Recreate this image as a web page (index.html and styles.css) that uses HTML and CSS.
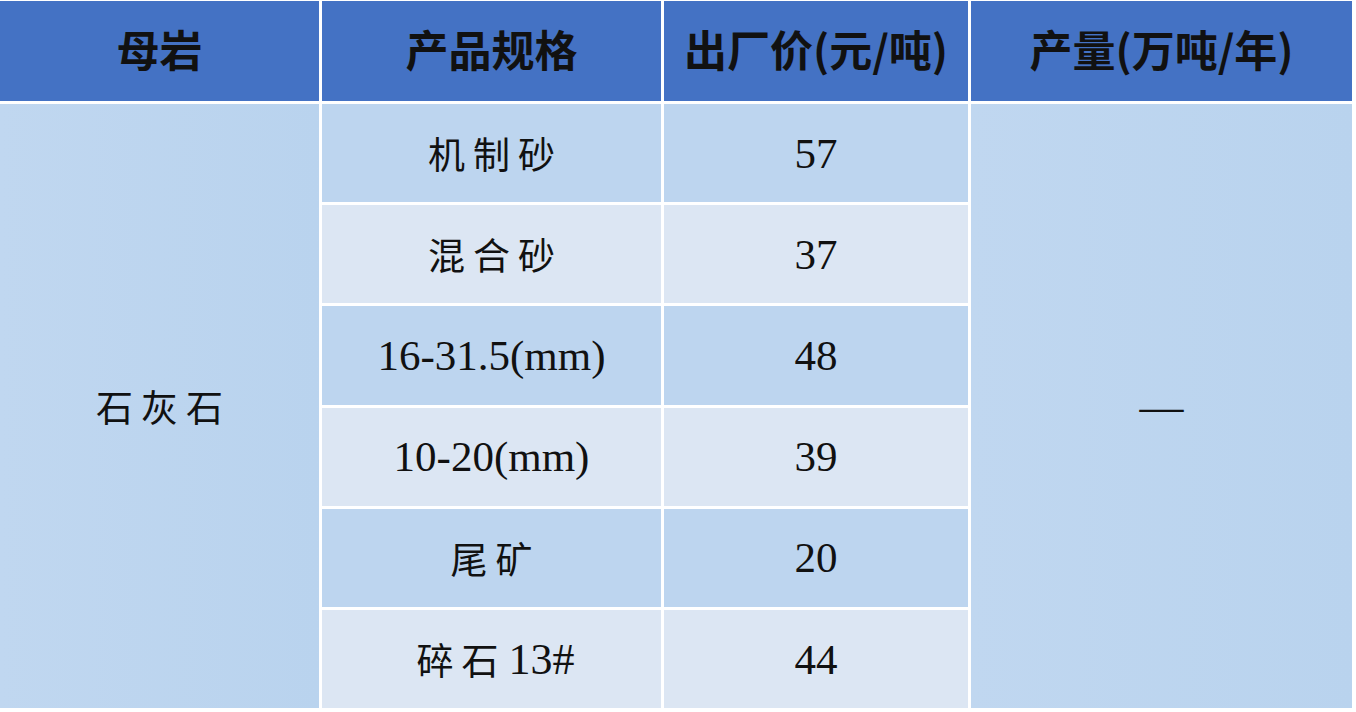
FILE: index.html
```html
<!DOCTYPE html>
<html lang="zh-CN">
<head>
<meta charset="utf-8">
<title>石灰石产品价格</title>
<link rel="stylesheet" href="styles.css">
</head>
<body>
<div class="table">
  <div class="th">母岩</div>
  <div class="th">产品规格</div>
  <div class="th">出厂价(元/吨)</div>
  <div class="th">产量(万吨/年)</div>

  <div class="td merged rock"><span class="zh">石灰石</span></div>
  <div class="td merged output"><span class="dash">—</span></div>

  <div class="td dark"><span class="zh">机制砂</span></div>
  <div class="td dark num">57</div>
  <div class="td light"><span class="zh">混合砂</span></div>
  <div class="td light num">37</div>
  <div class="td dark num">16-31.5(mm)</div>
  <div class="td dark num">48</div>
  <div class="td light num">10-20(mm)</div>
  <div class="td light num">39</div>
  <div class="td dark"><span class="zh">尾矿</span></div>
  <div class="td dark num">20</div>
  <div class="td light"><span class="zh">碎石</span><span class="num tag">13#</span></div>
  <div class="td light num">44</div>
</div>
</body>
</html>
```

FILE: styles.css
```css
html, body {
  margin: 0;
  padding: 0;
  background: #ffffff;
}

.table {
  display: grid;
  grid-template-columns: 319px 339px 304px 381px;
  grid-template-rows: 100px repeat(6, 98.2px);
  gap: 3px;
  padding-top: 1px;
  width: 1352px;
}

.th {
  background: #4472c4;
  color: #111111;
  font-family: "Noto Sans CJK SC", sans-serif;
  font-weight: 700;
  font-size: 43px;
  display: flex;
  align-items: center;
  justify-content: center;
  padding-bottom: 6px;
}

.td {
  display: flex;
  align-items: center;
  justify-content: center;
  color: #111111;
  font-family: "Liberation Serif", "Noto Sans CJK SC", serif;
  font-size: 43px;
}

.dark {
  background: #bdd5ef;
}

.light {
  background: #dce6f3;
}

.merged {
  background: linear-gradient(to right, #c0d7f0, #b9d3ee);
}

.rock {
  grid-column: 1;
  grid-row: 2 / 8;
}

.output {
  grid-column: 4;
  grid-row: 2 / 8;
}

.zh {
  font-family: "Noto Sans CJK SC", sans-serif;
  font-weight: 400;
  font-size: 37px;
  letter-spacing: 8px;
  padding-left: 8px;
}

.tag {
  font-family: "Liberation Serif", serif;
  font-size: 44px;
  margin-left: 2px;
}

.dash {
  font-family: "Liberation Serif", serif;
  font-size: 44px;
}
```
